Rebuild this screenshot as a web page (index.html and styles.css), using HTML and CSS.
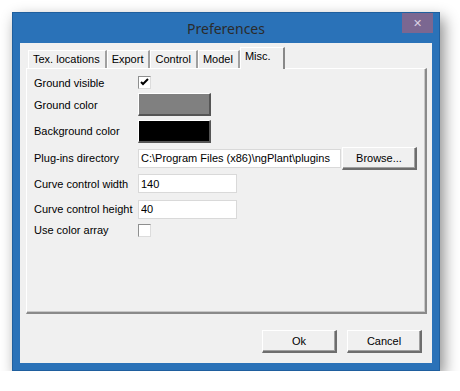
FILE: index.html
```html
<!DOCTYPE html>
<html lang="en">
  <head>
    <meta charset="UTF-8" />
    <title>Preferences</title>
    <link rel="stylesheet" href="styles.css">
  </head>
  <body>
    <div class="window">
      <div class="titlebar">
        <span class="title">Preferences</span>
        <span class="close">&#x2715;</span>
      </div>
      <div class="client">
        <div class="tabs">
          <div class="tab">Tex. locations</div>
          <div class="tab">Export</div>
          <div class="tab">Control</div>
          <div class="tab">Model</div>
          <div class="tab active">Misc.</div>
        </div>
        <div class="panel">
          <div class="form">
            <label>Ground visible</label>
            <div class="check">
              <svg width="11" height="11" viewBox="0 0 11 11">
                <path d="M2 5 L4 7 L9 2" stroke="#000" stroke-width="2" fill="none" />
              </svg>
            </div>

            <label>Ground color</label>
            <div class="swatch gray"></div>

            <label>Background color</label>
            <div class="swatch black"></div>

            <label>Plug-ins directory</label>
            <div class="dirrow">
              <input type="text" class="dir" value="C:\Program Files (x86)\ngPlant\plugins" />
              <button class="btn browse">Browse...</button>
            </div>

            <label>Curve control width</label>
            <input type="text" class="num" value="140" />

            <label>Curve control height</label>
            <input type="text" class="num" value="40" />

            <label>Use color array</label>
            <div class="check"></div>
          </div>
        </div>
        <div class="buttons">
          <button class="btn">Ok</button>
          <button class="btn">Cancel</button>
        </div>
      </div>
    </div>
  </body>
</html>
```

FILE: styles.css
```css
body {
  margin: 0;
  background: #fff;
  font-family: "Liberation Sans", Arial, sans-serif;
  font-size: 11px;
  color: #000;
}
.window {
  margin: 12px 0 0 12px;
  width: 428px;
  height: 359px;
  box-sizing: border-box;
  background: #2a72b8;
  border: 1px solid #1f5f9e;
  padding: 0 7px 7px 7px;
  display: flex;
  flex-direction: column;
  box-shadow: 4px 6px 14px rgba(0, 0, 0, 0.45);
}
.titlebar {
  height: 30px;
  position: relative;
  display: flex;
  justify-content: center;
  align-items: center;
}
.title {
  font-family: "Noto Sans", sans-serif;
  font-size: 14px;
  color: #2b2b2b;
}
.close {
  position: absolute;
  right: -1px;
  top: 0;
  width: 31px;
  height: 20px;
  background: #7b6791;
  color: #d9cfe2;
  font-size: 11px;
  display: flex;
  align-items: center;
  justify-content: center;
}
.client {
  flex: 1;
  background: #f0f0f0;
  padding: 5px 0 0 6px;
  position: relative;
}
.tabs {
  display: flex;
  align-items: flex-end;
  height: 20px;
  padding-left: 2px;
  position: relative;
  z-index: 1;
}
.tab {
  height: 18px;
  box-sizing: border-box;
  padding: 2px 5px 0 4px;
  border-left: 1px solid #fff;
  border-top: 1px solid #fff;
  border-right: 2px solid #a0a0a0;
  background: #f0f0f0;
  white-space: nowrap;
}
.tab.active {
  height: 22px;
  margin-bottom: -1px;
  padding: 2px 12px 0 4px;
  border-right-color: #888;
}
.panel {
  width: 401px;
  height: 246px;
  box-sizing: border-box;
  border-left: 1px solid #fff;
  border-top: 1px solid #fff;
  border-right: 2px solid #8a8a8a;
  border-bottom: 2px solid #8a8a8a;
  box-shadow: inset -1px -1px 0 #c8c8c8;
}
.form {
  display: grid;
  grid-template-columns: 104px auto;
  grid-template-rows: 17px 27px 26px 28px 23px 28px 14px;
  align-items: center;
  justify-items: start;
  padding: 5px 0 0 7px;
}
.form label {
  white-space: nowrap;
}
.check {
  width: 13px;
  height: 13px;
  box-sizing: border-box;
  background: #fff;
  border: 1px solid #8e8f8f;
  border-right-color: #dcdcdc;
  border-bottom-color: #dcdcdc;
  display: flex;
  align-items: center;
  justify-content: center;
}
.swatch {
  width: 73px;
  height: 23px;
  box-sizing: border-box;
  border-left: 1px solid #fff;
  border-top: 1px solid #fff;
  border-right: 2px solid #555;
  border-bottom: 2px solid #555;
}
.swatch.gray {
  background: #808080;
}
.swatch.black {
  background: #000;
}
.dirrow {
  display: flex;
  align-items: center;
}
input[type="text"] {
  font-family: "Liberation Sans", Arial, sans-serif;
  font-size: 11px;
  height: 19px;
  box-sizing: border-box;
  padding: 0 2px;
  border: 1px solid #d9d9d9;
  background: #fff;
  margin: 0;
}
.dir {
  width: 203px;
}
.num {
  width: 99px;
}
.btn {
  font-family: "Liberation Sans", Arial, sans-serif;
  font-size: 11px;
  width: 75px;
  height: 23px;
  background: #f0f0f0;
  border: none;
  border-left: 1px solid #fff;
  border-top: 1px solid #fff;
  border-right: 2px solid #6d6d6d;
  border-bottom: 2px solid #6d6d6d;
  box-shadow: inset -1px -1px 0 #a0a0a0;
  padding: 0;
  margin: 0;
}
.browse {
  margin-left: 1px;
}
.buttons {
  display: flex;
  justify-content: flex-end;
  gap: 10px;
  padding: 16px 10px 0 0;
}
```
